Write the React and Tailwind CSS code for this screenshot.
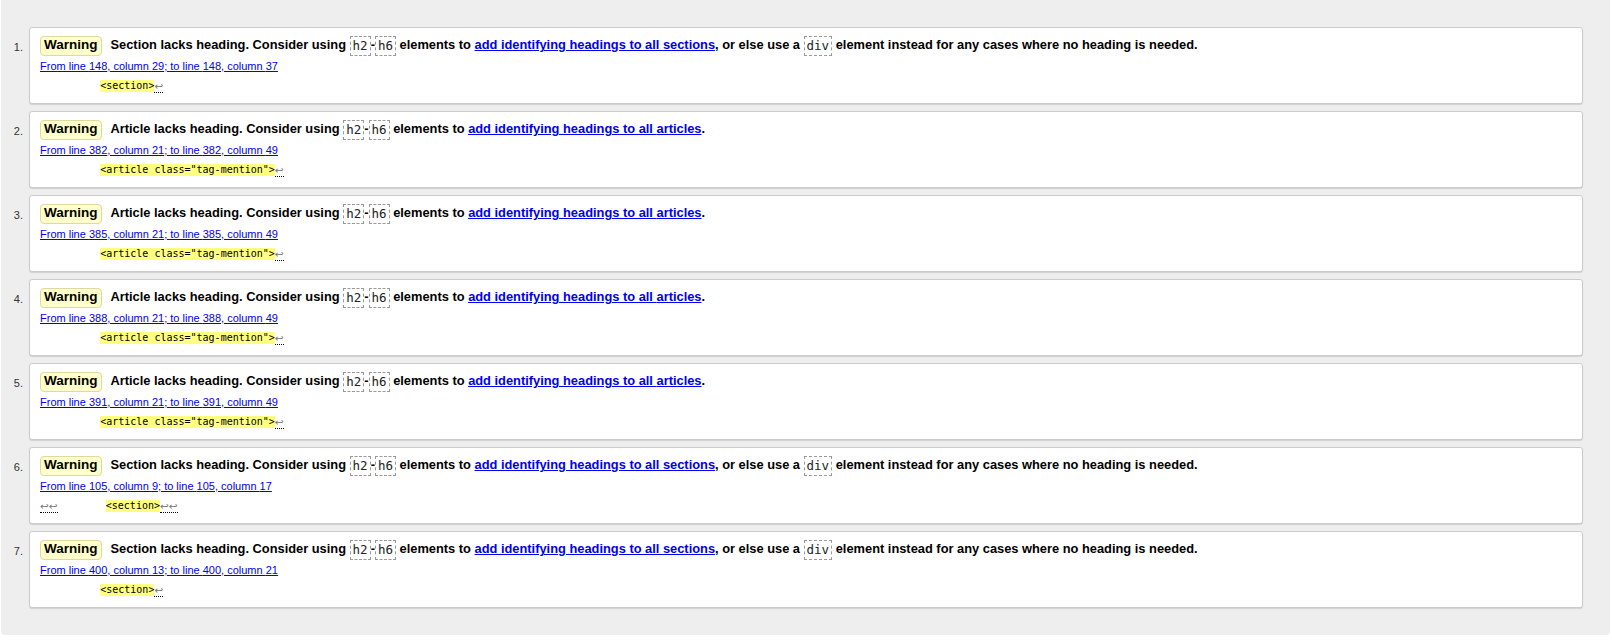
import React from 'react';

const items = [
  { kind: 'Section', from: [148, 29], to: [148, 37], pre: '          ', tag: '<section>', post: '↩' },
  { kind: 'Article', from: [382, 21], to: [382, 49], pre: '          ', tag: '<article class="tag-mention">', post: '↩' },
  { kind: 'Article', from: [385, 21], to: [385, 49], pre: '          ', tag: '<article class="tag-mention">', post: '↩' },
  { kind: 'Article', from: [388, 21], to: [388, 49], pre: '          ', tag: '<article class="tag-mention">', post: '↩' },
  { kind: 'Article', from: [391, 21], to: [391, 49], pre: '          ', tag: '<article class="tag-mention">', post: '↩' },
  { kind: 'Section', from: [105, 9], to: [105, 17], lead: '↩↩', pre: '        ', tag: '<section>', post: '↩↩' },
  { kind: 'Section', from: [400, 13], to: [400, 21], pre: '          ', tag: '<section>', post: '↩' },
];

const Code = ({ children }) => (
  <code className="inline-block border border-dashed border-[#999] px-[2px] leading-[18px] text-[12.5px] font-normal text-[#222] align-middle [font-family:'DejaVu_Sans_Mono',monospace]">
    {children}
  </code>
);

const Lf = ({ children }) => (
  <span className="text-[#777] text-[10.5px] border-b border-dotted border-black [font-family:'DejaVu_Sans',sans-serif]">{children}</span>
);

const Message = ({ item }) => {
  const isSection = item.kind === 'Section';
  return (
    <p className="flex items-center h-[21px] text-[12.85px] font-bold text-black whitespace-nowrap">
      <span className="inline-flex items-center h-[20px] px-[3px] mr-[9px] bg-[#ffffcc] border border-[#ddd9a0] rounded-[4px] text-[13.5px]">
        Warning
      </span>
      <span>
        {item.kind} lacks heading. Consider using <Code>h2</Code>-<Code>h6</Code> elements to{' '}
        <a href="#" className="text-[#0000ee] underline">
          add identifying headings to all {isSection ? 'sections' : 'articles'}
        </a>
        {isSection ? (
          <>
            , or else use a <Code>div</Code> element instead for any cases where no heading is needed.
          </>
        ) : (
          '.'
        )}
      </span>
    </p>
  );
};

export default function App() {
  return (
    <div className="min-h-[643px] bg-white [font-family:'Liberation_Sans',Arial,sans-serif]">
      <div className="ml-[1px] mr-[2px] bg-[#eeeeee] rounded-b-[4px] pt-[27px] pb-[27px] pr-[27px]">
        <ol className="flex flex-col gap-[7px]">
          {items.map((item, i) => (
            <li key={i} className="flex">
              <span className="w-[28px] shrink-0 pr-[6px] pt-[12px] text-right text-[11px] text-[#333]">{i + 1}.</span>
              <div className="flex-1 h-[77px] bg-white border border-[#cccccc] rounded-[3px] shadow-[0_1px_1px_rgba(0,0,0,0.12)] pl-[10px] pt-[7px]">
                <Message item={item} />
                <p className="h-[18px] flex items-center pt-[2px]">
                  <a href="#" className="text-[11px] text-[#0000ee] underline">
                    From line {item.from[0]}, column {item.from[1]}; to line {item.to[0]}, column {item.to[1]}
                  </a>
                </p>
                <p className="h-[22px] flex items-center pt-[2px] text-[10px] leading-[12px] whitespace-pre text-black [font-family:'DejaVu_Sans_Mono',monospace]">
                  {item.lead && <Lf>{item.lead}</Lf>}
                  <span>{item.pre}</span>
                  <b className="font-normal bg-[#ffff80]">{item.tag}</b>
                  <Lf>{item.post}</Lf>
                </p>
              </div>
            </li>
          ))}
        </ol>
      </div>
    </div>
  );
}
